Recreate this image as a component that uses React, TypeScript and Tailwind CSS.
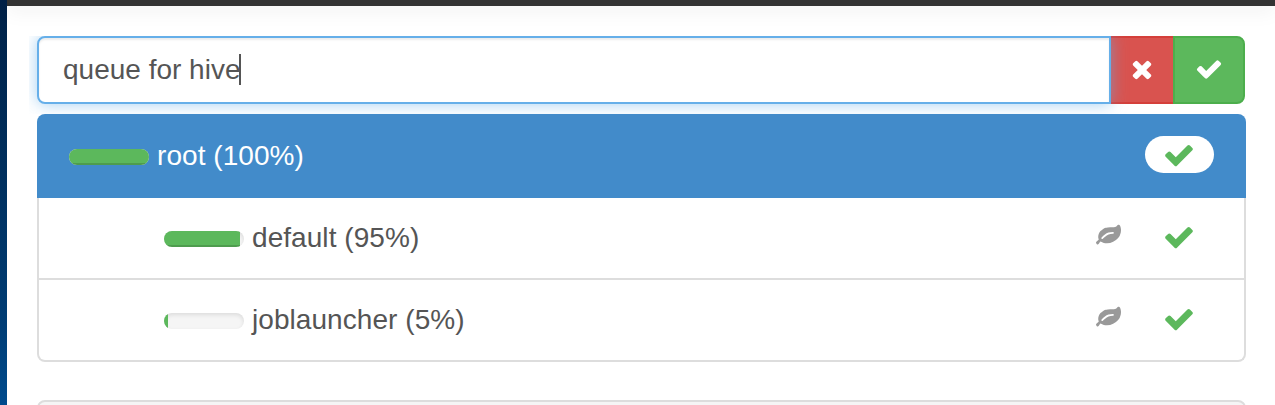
const CHECK =
  'M1671 566q0 40-28 68l-724 724-136 136q-28 28-68 28t-68-28l-136-136-362-362q-28-28-28-68t28-68l136-136q28-28 68-28t68 28l294 295 656-657q28-28 68-28t68 28l136 136q28 28 28 68z';
const TIMES =
  'M1490 1322q0 40-28 68l-136 136q-28 28-68 28t-68-28l-294-294-294 294q-28 28-68 28t-68-28l-136-136q-28-28-28-68t28-68l294-294-294-294q-28-28-28-68t28-68l136-136q28-28 68-28t68 28l294 294 294-294q28-28 68-28t68 28l136 136q28 28 28 68t-28 68l-294 294 294 294q28 28 28 68z';
const LEAF =
  'M1280 704q0-26-19-45t-45-19q-172 0-318 49.5t-259.5 134-235.5 219.5q-19 21-19 45 0 26 19 45t45 19q24 0 45-19 27-24 74-71t67-66q137-124 268.5-176t313.5-52q26 0 45-19t19-45zm512-198q0 95-20 193-46 224-184.5 383t-357.5 268q-214 108-438 108-148 0-286-47-15-5-88-42t-96-37q-16 0-39.5 32t-45 70-52.5 70-60 32q-43 0-63.5-17.5t-45.5-59.5q-2-4-6-11t-5.5-10-3-9.5-1.5-13.5q0-35 31-73.5t68-65.5 68-56 31-48q0-4-14-38t-16-44q-9-51-9-104 0-115 43.5-220t119-184.5 170.5-139 204-95.5q55-18 145-25.5t179.5-9 178.5-6 163.5-24 113.5-56.5l29.5-29.5 29.5-28 27-20 36.5-16 43.5-4.5q39 0 70.5 46t47.5 112 24 124 8 96z';

function Icon({ path, className }: { path: string; className: string }) {
  return (
    <svg viewBox="0 0 1792 1792" fill="currentColor" className={`block shrink-0 ${className}`} aria-hidden="true">
      <path d={path} />
    </svg>
  );
}

function Capacity({ value }: { value: number }) {
  return (
    <div className="mt-[2px] mr-2 h-4 w-20 shrink-0 overflow-hidden rounded-lg bg-[#f5f5f5] shadow-[inset_0_2px_4px_rgba(0,0,0,0.1)]">
      <div className="h-full bg-[#5cb85c] shadow-[inset_0_-2px_0_rgba(0,0,0,0.15)]" style={{ width: `${value}%` }} />
    </div>
  );
}

function ChildQueue({ name, value }: { name: string; value: number }) {
  return (
    <li className="flex h-[82px] items-center border-b-2 border-[#ddd] pl-[125px] pr-[49px] last:border-b-0 last:h-20">
      <Capacity value={value} />
      <span className="grow">
        {name} ({value}%)
      </span>
      <Icon path={LEAF} className="mr-[42px] -mt-[6px] h-[25px] w-[25px] text-[#999]" />
      <Icon path={CHECK} className="-mt-[3px] h-8 w-8 text-[#5cb85c]" />
    </li>
  );
}

export default function App() {
  return (
    <div className="flex h-[405px] w-[1275px] overflow-hidden bg-white font-['Liberation_Sans',Arial,sans-serif] text-[28px] leading-[40px] text-[#555]">
      <div className="w-[7px] shrink-0 bg-[linear-gradient(#002147,#00305f_45%,#003d75_80%,#004b8d)]" />
      <div className="flex grow flex-col">
        <header className="h-[6px] shrink-0 bg-[#333] shadow-[0_2px_20px_rgba(0,0,0,0.13)]" />
        <main className="flex flex-col pl-[30px] pt-[30px]">
          <div className="flex h-[68px] w-[1208px]">
            <div className="z-10 flex w-[1074px] items-center rounded-l-lg border-2 border-[#66afe9] bg-white pl-6 shadow-[inset_0_2px_2px_rgba(0,0,0,0.075),0_0_16px_rgba(102,175,233,0.6)] [clip-path:inset(0_-20px_-10px_-8px)]">
              <span>queue for hive</span>
              <span className="-ml-px -mt-[2px] h-[31px] w-[2px] bg-[#555]" />
            </div>
            <button aria-label="Cancel" className="flex w-[62px] items-center justify-center border-y-2 border-[#d43f3a] bg-[#d9534f] text-white">
              <Icon path={TIMES} className="-mt-[2px] h-7 w-7" />
            </button>
            <button aria-label="Save" className="flex w-[72px] items-center justify-center rounded-r-lg border-2 border-[#4cae4c] bg-[#5cb85c] text-white">
              <Icon path={CHECK} className="-mt-[2px] h-7 w-7" />
            </button>
          </div>
          <section className="z-20 mt-[10px] w-[1209px] tracking-[0.06px]">
            <div className="flex h-[84px] items-center rounded-t-lg bg-[#428bca] pl-8 pr-8 text-white">
              <Capacity value={100} />
              <span className="grow">root (100%)</span>
              <span className="-mt-[3px] flex h-[37px] w-[69px] items-center justify-center rounded-[20px] bg-white pr-px text-[#5cb85c]">
                <Icon path={CHECK} className="h-8 w-8" />
              </span>
            </div>
            <ul className="rounded-b-lg border-2 border-t-0 border-[#ddd]">
              <ChildQueue name="default" value={95} />
              <ChildQueue name="joblauncher" value={5} />
            </ul>
          </section>
          <div className="mt-[38px] h-20 w-[1209px] shrink-0 rounded-t-lg border-2 border-[#ddd] bg-[#f5f5f5]" />
        </main>
      </div>
    </div>
  );
}
